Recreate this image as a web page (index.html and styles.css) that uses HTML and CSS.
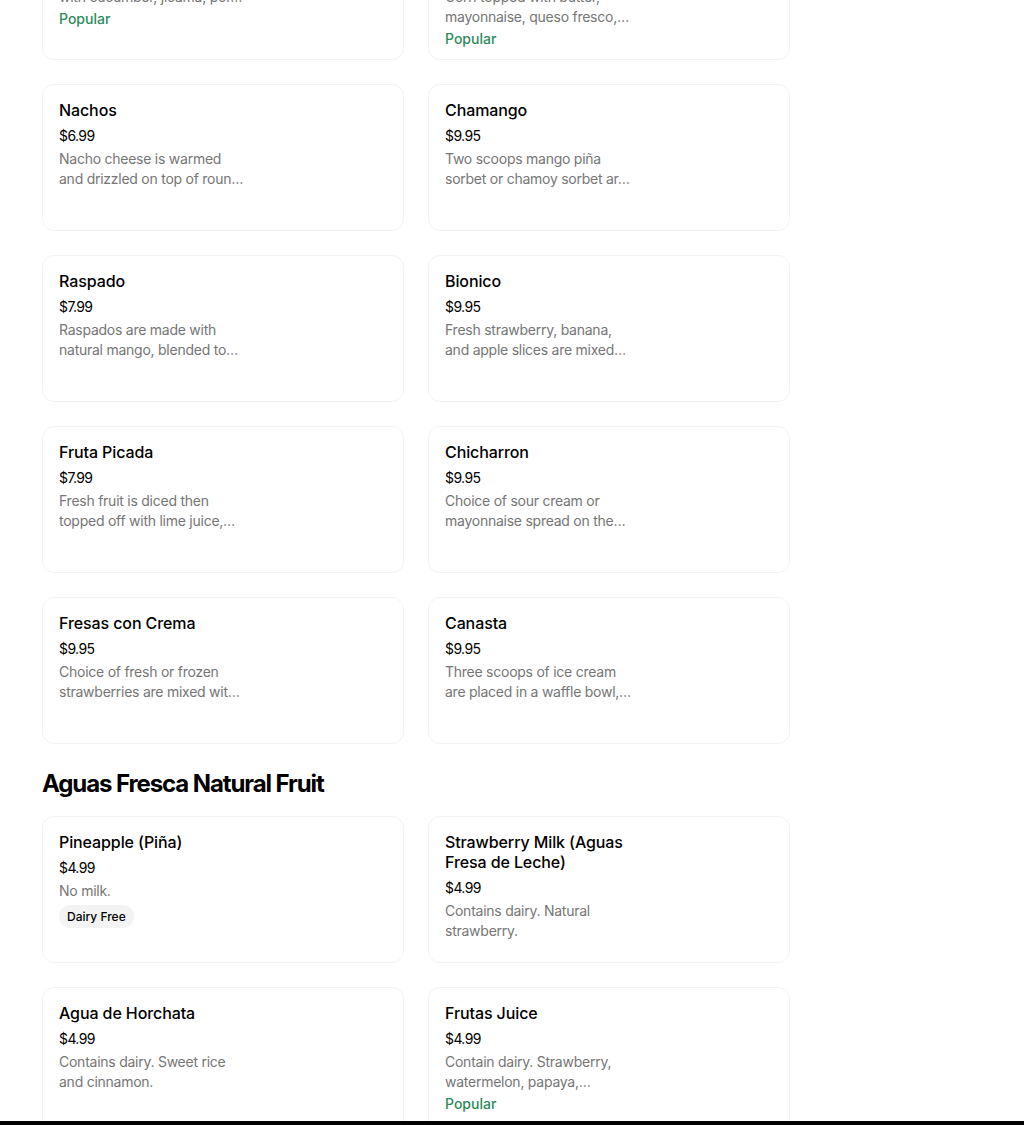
FILE: index.html
```html
<!DOCTYPE html>
<html lang="en">
<head>
<meta charset="utf-8">
<title>Menu</title>
<link rel="stylesheet" href="styles.css">
</head>
<body>
<main class="menu">
  <section class="category first">
    <div class="grid">
      <article class="card">
        <div class="info">
          <h3 class="name">Tostiloco</h3>
          <div class="price">$8.99</div>
          <p class="desc"><span class="line">Tostitos chips topped</span><span class="line">with cucumber, jicama, por…</span></p>
          <div class="popular">Popular</div>
        </div>
      </article>
      <article class="card">
        <div class="info">
          <h3 class="name">Elote en Vaso (Corn in a Cup)</h3>
          <div class="price">$7.99</div>
          <p class="desc"><span class="line">Corn topped with butter,</span><span class="line">mayonnaise, queso fresco,…</span></p>
          <div class="popular">Popular</div>
        </div>
      </article>
      <article class="card">
        <div class="info">
          <h3 class="name">Nachos</h3>
          <div class="price">$6.99</div>
          <p class="desc"><span class="line">Nacho cheese is warmed</span><span class="line">and drizzled on top of roun…</span></p>
        </div>
      </article>
      <article class="card">
        <div class="info">
          <h3 class="name">Chamango</h3>
          <div class="price">$9.95</div>
          <p class="desc"><span class="line">Two scoops mango piña</span><span class="line">sorbet or chamoy sorbet ar…</span></p>
        </div>
      </article>
      <article class="card">
        <div class="info">
          <h3 class="name">Raspado</h3>
          <div class="price">$7.99</div>
          <p class="desc"><span class="line">Raspados are made with</span><span class="line">natural mango, blended to…</span></p>
        </div>
      </article>
      <article class="card">
        <div class="info">
          <h3 class="name">Bionico</h3>
          <div class="price">$9.95</div>
          <p class="desc"><span class="line">Fresh strawberry, banana,</span><span class="line">and apple slices are mixed…</span></p>
        </div>
      </article>
      <article class="card">
        <div class="info">
          <h3 class="name">Fruta Picada</h3>
          <div class="price">$7.99</div>
          <p class="desc"><span class="line">Fresh fruit is diced then</span><span class="line">topped off with lime juice,…</span></p>
        </div>
      </article>
      <article class="card">
        <div class="info">
          <h3 class="name">Chicharron</h3>
          <div class="price">$9.95</div>
          <p class="desc"><span class="line">Choice of sour cream or</span><span class="line">mayonnaise spread on the…</span></p>
        </div>
      </article>
      <article class="card">
        <div class="info">
          <h3 class="name">Fresas con Crema</h3>
          <div class="price">$9.95</div>
          <p class="desc"><span class="line">Choice of fresh or frozen</span><span class="line">strawberries are mixed wit…</span></p>
        </div>
      </article>
      <article class="card">
        <div class="info">
          <h3 class="name">Canasta</h3>
          <div class="price">$9.95</div>
          <p class="desc"><span class="line">Three scoops of ice cream</span><span class="line">are placed in a waffle bowl,…</span></p>
        </div>
      </article>
    </div>
  </section>

  <section class="category">
    <h2 class="category-title">Aguas Fresca Natural Fruit</h2>
    <div class="grid">
      <article class="card">
        <div class="info">
          <h3 class="name">Pineapple (Piña)</h3>
          <div class="price">$4.99</div>
          <p class="desc"><span class="line">No milk.</span></p>
          <div class="tags"><span class="tag">Dairy Free</span></div>
        </div>
      </article>
      <article class="card">
        <div class="info">
          <h3 class="name"><span class="line">Strawberry Milk (Aguas</span><span class="line">Fresa de Leche)</span></h3>
          <div class="price">$4.99</div>
          <p class="desc"><span class="line">Contains dairy. Natural</span><span class="line">strawberry.</span></p>
        </div>
      </article>
      <article class="card">
        <div class="info">
          <h3 class="name">Agua de Horchata</h3>
          <div class="price">$4.99</div>
          <p class="desc"><span class="line">Contains dairy. Sweet rice</span><span class="line">and cinnamon.</span></p>
        </div>
      </article>
      <article class="card">
        <div class="info">
          <h3 class="name">Frutas Juice</h3>
          <div class="price">$4.99</div>
          <p class="desc"><span class="line">Contain dairy. Strawberry,</span><span class="line">watermelon, papaya,…</span></p>
          <div class="popular">Popular</div>
        </div>
      </article>
    </div>
  </section>
</main>
<div class="bottom-bar"></div>
</body>
</html>
```

FILE: styles.css
```css
* {
  box-sizing: border-box;
}

html, body {
  margin: 0;
  padding: 0;
  background: #ffffff;
  overflow: hidden;
}

body {
  font-family: Inter, "Noto Sans", "Liberation Sans", sans-serif;
  color: #000000;
  height: 1125px;
}

.menu {
  padding: 0 42px;
  margin-top: -98px;
}

.category + .category {
  margin-top: 24px;
}

.category-title {
  margin: 0 0 16px;
  font-size: 24px;
  line-height: 32px;
  font-weight: 700;
  letter-spacing: -1.1px;
}

.grid {
  display: grid;
  grid-template-columns: 362px 362px;
  column-gap: 24px;
  row-gap: 24px;
}

.card {
  min-height: 147px;
  border: 1px solid #f3f3f3;
  border-radius: 12px;
  padding: 15px 16px 10px;
  background: #ffffff;
}

.info {
  width: 184px;
  display: flex;
  flex-direction: column;
}

.name {
  margin: 0;
  font-size: 16px;
  line-height: 20px;
  font-weight: 500;
  color: #000000;
  letter-spacing: -0.1px;
}

.price {
  margin-top: 6px;
  font-size: 14px;
  line-height: 20px;
  font-weight: 400;
  color: #000000;
  letter-spacing: -0.6px;
}

.desc {
  margin: 3px 0 0;
  font-size: 14px;
  line-height: 20px;
  color: #767676;
  letter-spacing: -0.25px;
}

.line {
  display: block;
  white-space: nowrap;
}

.popular {
  margin-top: 2px;
  font-size: 14px;
  line-height: 20px;
  font-weight: 500;
  color: #2e8a5c;
}

.tags {
  margin-top: 4px;
  display: flex;
}

.tag {
  display: inline-flex;
  align-items: center;
  height: 23px;
  padding: 0 8px;
  border-radius: 12px;
  background: #f3f3f3;
  font-size: 12px;
  font-weight: 500;
  color: #000000;
}

.bottom-bar {
  position: fixed;
  left: 0;
  right: 0;
  bottom: 0;
  height: 4px;
  background: #000000;
}
```
